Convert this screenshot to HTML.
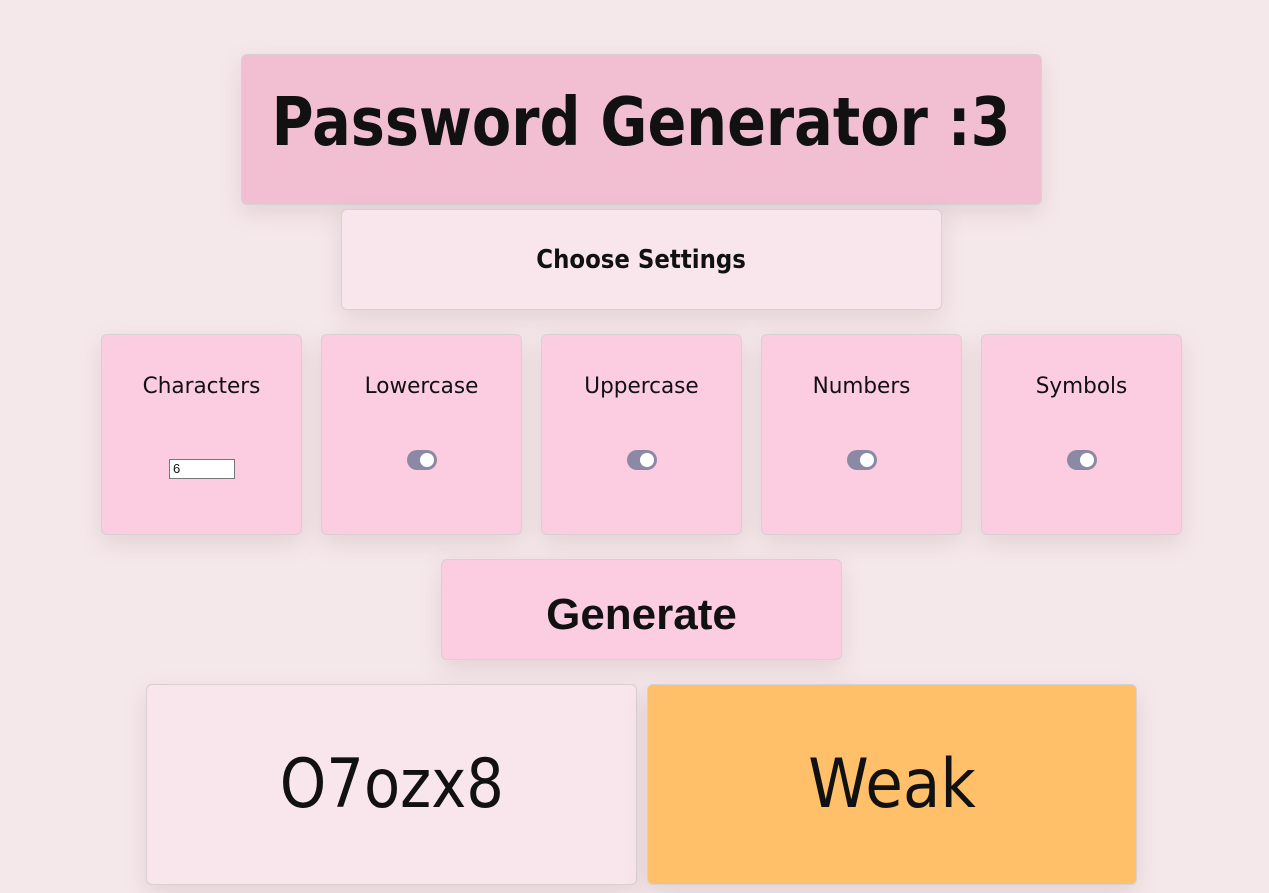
<!DOCTYPE html>
<html><head><meta charset="utf-8"><style>
body{margin:0;width:1269px;height:893px;background:#f5e8eb;position:relative;overflow:hidden;font-family:"DejaVu Sans","Liberation Sans",sans-serif;color:#111}
.b{position:absolute;box-sizing:border-box;border:1px solid #d8d0d3;border-radius:6px;box-shadow:0 8px 24px rgba(120,80,90,.15);display:flex;align-items:center;justify-content:center;text-align:center}
.t{display:inline-block;white-space:nowrap}
.card{background:#fccde0;width:201px;height:201px;top:334px}
.card .l{position:absolute;top:39px;left:0;right:0;font-size:22px;transform:scaleX(.98)}
.tg{position:absolute;left:85px;top:115px;width:30px;height:20px;border-radius:10px;background:#8c89a5}
.tg::after{content:"";position:absolute;right:3px;top:3px;width:14px;height:14px;border-radius:50%;background:#fff}
</style></head><body>
<div class="b" style="left:241px;top:54px;width:801px;height:151px;background:#f2bfd2;align-items:flex-start;padding-top:28px"><span class="t" style="font-size:67px;font-weight:bold;transform:scaleX(.855)">Password Generator :3</span></div>
<div class="b" style="left:341px;top:209px;width:601px;height:101px;background:#f8e6ec"><span class="t" style="font-size:26px;font-weight:bold;transform:scaleX(.88)">Choose Settings</span></div>
<div class="b card" style="left:101px"><div class="l">Characters</div><div style="position:absolute;left:67px;top:124px;width:66px;height:20px;box-sizing:border-box;border:1px solid #777;background:#fff;font:13px 'Liberation Sans',sans-serif;text-align:left;padding:1px 3px">6</div></div>
<div class="b card" style="left:321px"><div class="l">Lowercase</div><div class="tg"></div></div>
<div class="b card" style="left:541px"><div class="l">Uppercase</div><div class="tg"></div></div>
<div class="b card" style="left:761px"><div class="l">Numbers</div><div class="tg"></div></div>
<div class="b card" style="left:981px"><div class="l">Symbols</div><div class="tg"></div></div>
<div class="b" style="left:441px;top:559px;width:401px;height:101px;background:#fccde0;padding-top:10px"><span class="t" style="font-family:'Liberation Sans',sans-serif;font-size:44px;font-weight:bold">Generate</span></div>
<div class="b" style="left:146px;top:684px;width:491px;height:201px;background:#f8e6ec"><span class="t" style="font-size:68px;transform:scaleX(.87)">O7ozx8</span></div>
<div class="b" style="left:647px;top:684px;width:490px;height:201px;background:#ffc069"><span class="t" style="font-size:68px;transform:scaleX(.9)">Weak</span></div>
</body></html>
